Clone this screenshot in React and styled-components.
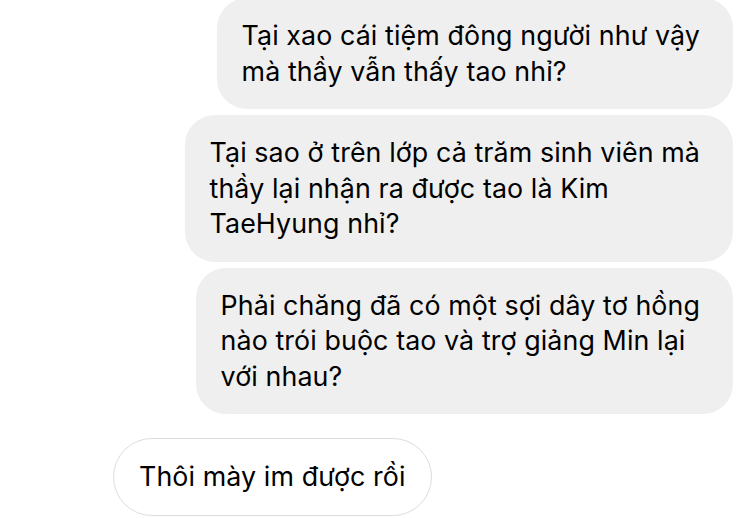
import React from "react";
import styled, { createGlobalStyle } from "styled-components";

const Global = createGlobalStyle`
  html, body { margin: 0; padding: 0; background: #fff; }
  body { font-family: Inter, "Noto Sans", "Liberation Sans", sans-serif; color: #000; }
`

const Thread = styled.div`
  display: flex; flex-direction: column; gap: 6px;
  padding: 0 17px 0 113px; margin-top: -2px;
  width: 750px; height: 518px; box-sizing: border-box; overflow: hidden;
`
const Bubble = styled.div`
  align-self: ${p => p.$mine ? "flex-end" : "flex-start"};
  margin-top: ${p => p.$gap || 0}px;
  background: ${p => p.$mine ? "#efefef" : "#fff"};
  border: ${p => p.$mine ? "none" : "1.5px solid #dcdcdc"};
  border-radius: ${p => p.$mine ? "30px" : "40px"};
  padding: ${p => p.$mine ? "20px 33px 20px 25px" : "20px 25px"};
  font-size: 26.8px; line-height: 35.5px; letter-spacing: 0.1px;
  white-space: nowrap;
`

const messages = [
  { mine: true, lines: ["Tại xao cái tiệm đông người như vậy", "mà thầy vẫn thấy tao nhỉ?"] },
  { mine: true, lines: ["Tại sao ở trên lớp cả trăm sinh viên mà", "thầy lại nhận ra được tao là Kim", "TaeHyung nhỉ?"] },
  { mine: true, lines: ["Phải chăng đã có một sợi dây tơ hồng", "nào trói buộc tao và trợ giảng Min lại", "với nhau?"] },
  { mine: false, gap: 18, lines: ["Thôi mày im được rồi"] },
]

export default function App() {
  return (
    <>
      <Global />
      <Thread>
        {messages.map((m, i) => (
          <Bubble key={i} $mine={m.mine} $gap={m.gap}>
            {m.lines.map((l, j) => <div key={j}>{l}</div>)}
          </Bubble>
        ))}
      </Thread>
    </>
  )
}
